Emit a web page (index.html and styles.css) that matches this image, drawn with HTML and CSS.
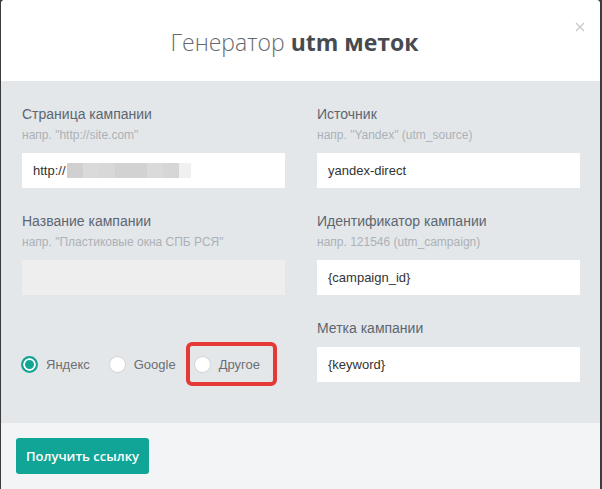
FILE: index.html
```html
<!DOCTYPE html>
<html lang="ru">
<head>
<meta charset="utf-8">
<title>Генератор utm меток</title>
<link rel="stylesheet" href="styles.css">
</head>
<body>
<div class="modal">
  <header class="modal-head">
    <h1 class="title"><span class="light">Генератор</span> <b>utm меток</b></h1>
    <span class="close"><svg width="10" height="10" viewBox="0 0 10 10"><path d="M1 1L9 9M9 1L1 9" stroke="#c9c9c9" stroke-width="1.4" fill="none"/></svg></span>
  </header>
  <section class="modal-body">
    <div class="col">
      <div class="field">
        <div class="label">Страница кампании</div>
        <div class="hint">напр. "http://site.com"</div>
        <div class="input">http://<span class="blur"><i class="b1"></i><i class="b2"></i><i class="b3"></i><i class="b4"></i><i class="b5"></i><i class="b6"></i><i class="b7"></i></span></div>
      </div>
      <div class="field">
        <div class="label">Название кампании</div>
        <div class="hint">напр. "Пластиковые окна СПБ РСЯ"</div>
        <div class="input disabled"></div>
      </div>
      <div class="radios">
        <label class="radio-item"><span class="radio checked"></span>Яндекс</label>
        <label class="radio-item"><span class="radio"></span>Google</label>
        <label class="radio-item marked"><span class="radio"></span>Другое</label>
      </div>
    </div>
    <div class="col">
      <div class="field">
        <div class="label">Источник</div>
        <div class="hint">напр. "Yandex" (utm_source)</div>
        <div class="input">yandex-direct</div>
      </div>
      <div class="field">
        <div class="label">Идентификатор кампании</div>
        <div class="hint">напр. 121546 (utm_campaign)</div>
        <div class="input">{campaign_id}</div>
      </div>
      <div class="field">
        <div class="label">Метка кампании</div>
        <div class="input nohint">{keyword}</div>
      </div>
    </div>
  </section>
  <footer class="modal-foot">
    <button class="btn">Получить ссылку</button>
  </footer>
</div>
</body>
</html>
```
FILE: styles.css
```css
* { box-sizing: border-box; }
html, body { margin: 0; padding: 0; }
body {
  background: #3b3b3b;
  width: 602px;
  height: 489px;
  overflow: hidden;
  font-family: "Liberation Sans", Arial, sans-serif;
}
.modal {
  margin-left: 1px;
  width: 599px;
  height: 489px;
  background: #f3f4f6;
  border-radius: 4px 4px 0 0;
  overflow: hidden;
  display: flex;
  flex-direction: column;
}
.modal-head {
  position: relative;
  height: 81px;
  background: #fff;
  display: flex;
  align-items: center;
  justify-content: center;
  padding-right: 12px;
}
.title {
  margin: 0;
  font-family: "Open Sans", sans-serif;
  font-size: 23px;
  font-weight: 300;
  color: #666a6e;
  line-height: 30px;
  margin-top: 2px;
}
.title b { font-weight: 700; color: #474b50; }
.close {
  position: absolute;
  top: 22px;
  right: 15px;
  width: 10px;
  height: 10px;
  display: block;
}
.close svg { display: block; }
.modal-body {
  height: 342px;
  background: #e4e7ea;
  padding: 24px 19px 0 21px;
  display: grid;
  grid-template-columns: 263px 263px;
  column-gap: 32px;
  align-content: start;
}
.field { margin-bottom: 24px; }
.label {
  font-size: 14px;
  line-height: 18px;
  color: #5c6670;
}
.hint {
  margin-top: 5px;
  font-size: 12px;
  line-height: 14px;
  color: #abb1b7;
}
.input {
  margin-top: 11px;
  height: 35px;
  background: #fff;
  padding-left: 11px;
  font-size: 13px;
  line-height: 35px;
  color: #333;
  display: flex;
  align-items: center;
}
.input.nohint { margin-top: 10px; }
.input.disabled { background: #eeeeee; }
.blur { display: flex; height: 15px; margin-left: 1px; }
.blur i { display: block; height: 15px; width: 17px; }
.blur .b1 { background: #d0d0d0; width: 16px; }
.blur .b2 { background: #dadada; width: 16px; }
.blur .b3 { background: #d8d8d8; width: 16px; }
.blur .b4 { background: #d2d2d2; width: 32px; }
.blur .b5 { background: #dadada; width: 16px; }
.blur .b6 { background: #d6d6d6; width: 16px; }
.blur .b7 { background: #f0f0f0; width: 12px; }
.radios {
  margin-top: 47px;
  display: flex;
  align-items: center;
  margin-left: -1px;
}
.radio-item {
  display: flex;
  align-items: center;
  font-size: 13px;
  color: #6b6f73;
  margin-right: 19px;
}
.radio {
  width: 17px;
  height: 17px;
  border-radius: 50%;
  background: #fff;
  border: 1px solid #cfd3d6;
  margin-right: 8px;
  flex: none;
}
.radio.checked {
  background: #12a594;
  border: 2px solid #12a594;
  box-shadow: inset 0 0 0 2px #fff;
}
.radio-item.marked {
  margin-left: -9px;
  border: 4px solid #e53935;
  border-radius: 6px;
  padding: 0 13px 0 4px;
  height: 44px;
}
.modal-foot {
  flex: 1;
  padding: 15px 15px;
}
.btn {
  height: 36px;
  width: 133px;
  border: none;
  border-radius: 3px;
  background: #10a596;
  color: #fff;
  font-family: "Open Sans", sans-serif;
  font-size: 13px;
  font-weight: 600;
  padding: 0;
}
```
